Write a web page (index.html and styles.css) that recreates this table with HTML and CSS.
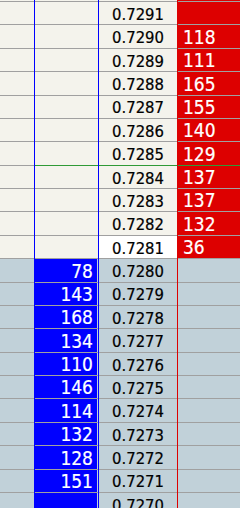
FILE: index.html
```html
<!DOCTYPE html>
<html lang="en">
<head>
<meta charset="utf-8">
<title>Depth of market</title>
<link rel="stylesheet" href="styles.css">
</head>
<body>
<div class="book">
  <div class="row up top"><div class="c a"></div><div class="c b"></div><div class="c p"></div><div class="c v"></div></div>
  <div class="row up"><div class="c a"></div><div class="c b"></div><div class="c p"><span>0.7291</span></div><div class="c v"></div></div>
  <div class="row up"><div class="c a"></div><div class="c b"></div><div class="c p"><span>0.7290</span></div><div class="c v"><span>118</span></div></div>
  <div class="row up"><div class="c a"></div><div class="c b"></div><div class="c p"><span>0.7289</span></div><div class="c v"><span>111</span></div></div>
  <div class="row up"><div class="c a"></div><div class="c b"></div><div class="c p"><span>0.7288</span></div><div class="c v"><span>165</span></div></div>
  <div class="row up"><div class="c a"></div><div class="c b"></div><div class="c p"><span>0.7287</span></div><div class="c v"><span>155</span></div></div>
  <div class="row up"><div class="c a"></div><div class="c b"></div><div class="c p"><span>0.7286</span></div><div class="c v"><span>140</span></div></div>
  <div class="row up sep"><div class="c a"></div><div class="c b"></div><div class="c p"><span>0.7285</span></div><div class="c v"><span>129</span></div></div>
  <div class="row up"><div class="c a"></div><div class="c b"></div><div class="c p"><span>0.7284</span></div><div class="c v"><span>137</span></div></div>
  <div class="row up"><div class="c a"></div><div class="c b"></div><div class="c p"><span>0.7283</span></div><div class="c v"><span>137</span></div></div>
  <div class="row up"><div class="c a"></div><div class="c b"></div><div class="c p"><span>0.7282</span></div><div class="c v"><span>132</span></div></div>
  <div class="row up last"><div class="c a"></div><div class="c b"></div><div class="c p"><span>0.7281</span></div><div class="c v"><span>36</span></div></div>
  <div class="row low"><div class="c a"></div><div class="c b"><span>78</span></div><div class="c p"><span>0.7280</span></div><div class="c v"></div></div>
  <div class="row low"><div class="c a"></div><div class="c b"><span>143</span></div><div class="c p"><span>0.7279</span></div><div class="c v"></div></div>
  <div class="row low"><div class="c a"></div><div class="c b"><span>168</span></div><div class="c p"><span>0.7278</span></div><div class="c v"></div></div>
  <div class="row low"><div class="c a"></div><div class="c b"><span>134</span></div><div class="c p"><span>0.7277</span></div><div class="c v"></div></div>
  <div class="row low"><div class="c a"></div><div class="c b"><span>110</span></div><div class="c p"><span>0.7276</span></div><div class="c v"></div></div>
  <div class="row low"><div class="c a"></div><div class="c b"><span>146</span></div><div class="c p"><span>0.7275</span></div><div class="c v"></div></div>
  <div class="row low"><div class="c a"></div><div class="c b"><span>114</span></div><div class="c p"><span>0.7274</span></div><div class="c v"></div></div>
  <div class="row low"><div class="c a"></div><div class="c b"><span>132</span></div><div class="c p"><span>0.7273</span></div><div class="c v"></div></div>
  <div class="row low"><div class="c a"></div><div class="c b"><span>128</span></div><div class="c p"><span>0.7272</span></div><div class="c v"></div></div>
  <div class="row low"><div class="c a"></div><div class="c b"><span>151</span></div><div class="c p"><span>0.7271</span></div><div class="c v"></div></div>
  <div class="row low"><div class="c a"></div><div class="c b"></div><div class="c p"><span>0.7270</span></div><div class="c v"></div></div>
</div>
</body>
</html>
```
FILE: styles.css
```css
html, body {
  margin: 0;
  padding: 0;
}
body {
  width: 240px;
  height: 508px;
  overflow: hidden;
  background: #c1d1d9;
  font-family: "DejaVu Sans Condensed", "DejaVu Sans", sans-serif;
  font-stretch: condensed;
}
.book {
  display: flex;
  flex-direction: column;
  width: 240px;
}
.row {
  display: flex;
  flex: 0 0 auto;
  height: 23.375px;
  --line: #a0a0a0;
  --bg: #f4f3ec;
  --vol: #dd0000;
}
.row.top {
  height: 2px;
}
.row.low {
  --bg: #c1d1d9;
  --vol: #c1d1d9;
}
.c {
  box-sizing: border-box;
  flex: 0 0 auto;
  height: 100%;
  display: flex;
  align-items: flex-end;
  padding-bottom: 2px;
  background-color: var(--bg);
  background-image: linear-gradient(to top, var(--line) 1px, transparent 1px);
  overflow: hidden;
}
.c span {
  line-height: 1;
  white-space: nowrap;
}
.row.sep .b,
.row.sep .p,
.row.sep .v {
  --line: #2f9a36;
}
.a {
  width: 34px;
}
.b {
  width: 65px;
  border-left: 1px solid #0000ff;
  border-right: 1px solid #0000ff;
  justify-content: flex-end;
  padding-right: 5px;
  color: #ffffff;
  font-size: 19px;
  -webkit-text-stroke: 0.2px #ffffff;
}
.row.low .b {
  background-image:
    linear-gradient(to top, var(--line) 1px, transparent 1px),
    linear-gradient(to left, #c1d1d9 1px, #0000ff 1px);
}
.p {
  width: 78px;
  justify-content: center;
  color: #000000;
  font-size: 16.5px;
  -webkit-text-stroke: 0.2px #000000;
}
.row.last .p {
  --bg: #ffffff;
}
.v {
  width: 63px;
  border-left: 1px solid #dd0000;
  padding-left: 5px;
  color: #ffffff;
  font-size: 19px;
  -webkit-text-stroke: 0.2px #ffffff;
  background-color: var(--vol);
}
```
